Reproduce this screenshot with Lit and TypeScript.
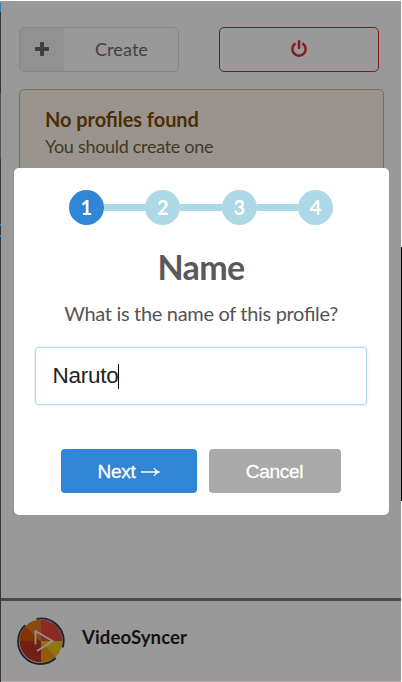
import { LitElement, html, css } from "lit";
import { customElement, state } from "lit/decorators.js";

@customElement("app-root")
export class AppRoot extends LitElement {
  static styles = css`
    :host {
      display: block;
      position: relative;
      width: 402px;
      height: 682px;
      overflow: hidden;
      background: #fff;
      font-family: Lato, "Liberation Sans", sans-serif;
      font-feature-settings: "liga" 1;
      box-sizing: border-box;
      padding-top: 1px;
    }
    * {
      box-sizing: border-box;
    }
    .frame {
      display: grid;
      grid-template-columns: 1px 400px 1px;
      height: 681px;
    }
    .edge-left {
      background: linear-gradient(
        #999 0 2px,
        #347fae 2px 11px,
        #38383a 11px 92px,
        #555 92px 158px,
        #38383a 158px 223px,
        #347fae 223px 225px,
        #38383a 225px 234px,
        #347fae 234px 236px,
        #38383a 236px
      );
    }
    .edge-right {
      background: linear-gradient(#fff 0 246px, #000 246px 500px, #fff 500px);
    }
    .page {
      display: flex;
      flex-direction: column;
      background: #999;
      border-bottom: 1px solid #b4b0b0;
      min-width: 0;
    }
    .body {
      height: 597px;
      padding: 26px 17px 0 18px;
    }
    .toolbar {
      display: flex;
      gap: 40px;
    }
    .btn {
      display: flex;
      width: 160px;
      height: 45px;
      border-radius: 5px;
      border: 1px solid #868687;
      overflow: hidden;
      align-items: center;
    }
    .plus {
      display: flex;
      align-items: center;
      justify-content: center;
      width: 44px;
      height: 43px;
      padding: 0 1px 1px 0;
      background: #919191;
    }
    .label {
      flex: 1;
      text-align: center;
      font-size: 18.2px;
      line-height: 20px;
      padding: 0 0 2px 1px;
      color: #424242;
    }
    .power {
      border-color: #831717;
      justify-content: center;
      padding-bottom: 2px;
    }
    svg {
      display: block;
    }
    .notice {
      margin-top: 17px;
      width: 365px;
      height: 110px;
      border: 1px solid #7b7058;
      border-radius: 5px;
      background: #99958e;
      padding: 18px 25px;
    }
    .notice-title {
      font-size: 20px;
      line-height: 23px;
      font-weight: 700;
      letter-spacing: -0.06px;
      color: #4c2d06;
    }
    .notice-text {
      font-size: 18px;
      line-height: 26px;
      margin-top: 2px;
      letter-spacing: -0.3px;
      color: #453723;
    }
    .footer {
      flex: 1;
      border-top: 3px solid #4a4a4a;
      display: flex;
      align-items: center;
      padding-left: 16px;
      gap: 17px;
    }
    .brand {
      font-size: 18.6px;
      line-height: 24px;
      font-weight: 700;
      letter-spacing: 0.08px;
      color: #131313;
      padding-bottom: 8px;
    }
    .dialog {
      position: absolute;
      left: 14px;
      top: 168px;
      width: 375px;
      height: 347px;
      border-radius: 5px;
      background: #fff;
      display: flex;
      flex-direction: column;
      align-items: center;
      padding-top: 22px;
    }
    .steps {
      display: flex;
      align-items: center;
      margin-right: 1px;
    }
    .step {
      width: 35px;
      height: 35px;
      border-radius: 50%;
      background: #add8e6;
      color: #fff;
      font-size: 20px;
      line-height: 35px;
      font-weight: 700;
      text-align: center;
    }
    .step.active {
      background: #3085d6;
    }
    .line {
      width: 41.4px;
      height: 7px;
      background: #add8e6;
    }
    h2 {
      margin: 21px 1px 0 0;
      font-size: 34px;
      line-height: 42px;
      font-weight: 700;
      letter-spacing: -0.6px;
      color: #595959;
    }
    p {
      margin: 13px 1px 0 0;
      font-size: 20px;
      line-height: 24px;
      letter-spacing: -0.32px;
      color: #545454;
    }
    .field {
      display: flex;
      align-items: center;
      margin: 22px 2px 0 0;
      width: 332px;
      height: 58px;
      border: 1px solid #b4dbed;
      border-radius: 3px;
      box-shadow: 0 0 3px #c4e6f5;
      padding-left: 17px;
      font: 22.5px / 26px "Liberation Sans", sans-serif;
      letter-spacing: -0.25px;
      color: #222;
    }
    .caret {
      width: 1px;
      height: 25px;
      margin-left: -1px;
      background: #000;
    }
    .actions {
      display: flex;
      gap: 12px;
      margin: 44px 2px 0 0;
    }
    button {
      display: flex;
      align-items: center;
      justify-content: center;
      border: 0;
      border-radius: 4px;
      padding: 1px 0 0;
      height: 44px;
      width: 136px;
      gap: 5px;
      color: #fff;
      font: 19px / 22px "Liberation Sans", sans-serif;
      letter-spacing: -0.25px;
      -webkit-text-stroke: 0.3px #fff;
      background: #3085d6;
    }
    .cancel {
      width: 132px;
      background: #aaa;
    }
  `;

  @state() private current = 1;
  @state() private name = "Naruto";

  private steps() {
    return [1, 2, 3, 4].map(
      (n) => html`
        ${n > 1 ? html`<div class="line"></div>` : ""}
        <div class="step ${n === this.current ? "active" : ""}">${n}</div>
      `,
    );
  }

  render() {
    return html`
      <div class="frame">
        <div class="edge-left"></div>
        <main class="page">
          <section class="body">
            <div class="toolbar">
              <div class="btn">
                <span class="plus">
                  <svg width="14" height="14" viewBox="0 0 14 14">
                    <path
                      d="M5 .8Q5 0 5.8 0H8.2Q9 0 9 .8V5H13.2Q14 5 14 5.8V8.2Q14 9 13.2 9H9V13.2Q9 14 8.2 14H5.8Q5 14 5 13.2V9H.8Q0 9 0 8.2V5.8Q0 5 .8 5H5Z"
                      fill="#3f3f40"
                    />
                  </svg>
                </span>
                <span class="label">Create</span>
              </div>
              <div class="btn power">
                <svg width="16" height="17" viewBox="0 0 16 17">
                  <g fill="none" stroke="#8b1c1c" stroke-width="2.5">
                    <path d="M4.6 3.4A6.6 6.6 0 1 0 11.4 3.4" />
                    <path d="M8 1.3V8" stroke-linecap="round" />
                  </g>
                </svg>
              </div>
            </div>
            <div class="notice">
              <div class="notice-title">No profiles found</div>
              <div class="notice-text">You should create one</div>
            </div>
          </section>
          <footer class="footer">
            <svg width="48" height="48" viewBox="0 0 48 48">
              <path d="M24 24V2.5A21.5 21.5 0 0 1 45.5 24Z" fill="#8c2b24" />
              <path d="M24 24L8.8 8.8A21.5 21.5 0 0 1 24 2.5Z" fill="#8b4914" />
              <path d="M24 24H2.5A21.5 21.5 0 0 1 8.8 8.8Z" fill="#803200" />
              <path d="M24 24V45.5A21.5 21.5 0 0 1 2.5 24Z" fill="#731f18" />
              <path d="M24 24H45.5A21.5 21.5 0 0 1 39.2 39.2Z" fill="#917609" />
              <path d="M24 24L39.2 39.2A21.5 21.5 0 0 1 24 45.5Z" fill="#925d0b" />
              <g fill="none" stroke="#1a2530" stroke-width="1.9">
                <path d="M19.5 1.9A22.5 22.5 0 0 1 45.6 30.5" />
                <path d="M8.1 8.1A22.5 22.5 0 0 0 38.8 41" />
              </g>
              <path
                d="M18.5 27.5V14L35.5 24L20 34"
                fill="none"
                stroke="#929292"
                stroke-width="1.8"
              />
            </svg>
            <span class="brand">VideoSyncer</span>
          </footer>
        </main>
        <div class="edge-right"></div>
      </div>
      <div class="dialog">
        <div class="steps">${this.steps()}</div>
        <h2>Name</h2>
        <p>What is the name of this profile?</p>
        <div class="field"><span>${this.name}</span><i class="caret"></i></div>
        <div class="actions">
          <button>
            Next
            <svg width="19" height="10" viewBox="0 0 19 10">
              <path
                d="M0 5H17M13 1Q14.5 4 18 5Q14.5 6 13 9"
                fill="none"
                stroke="#fff"
                stroke-width="1.3"
              />
            </svg>
          </button>
          <button class="cancel">Cancel</button>
        </div>
      </div>
    `;
  }
}
